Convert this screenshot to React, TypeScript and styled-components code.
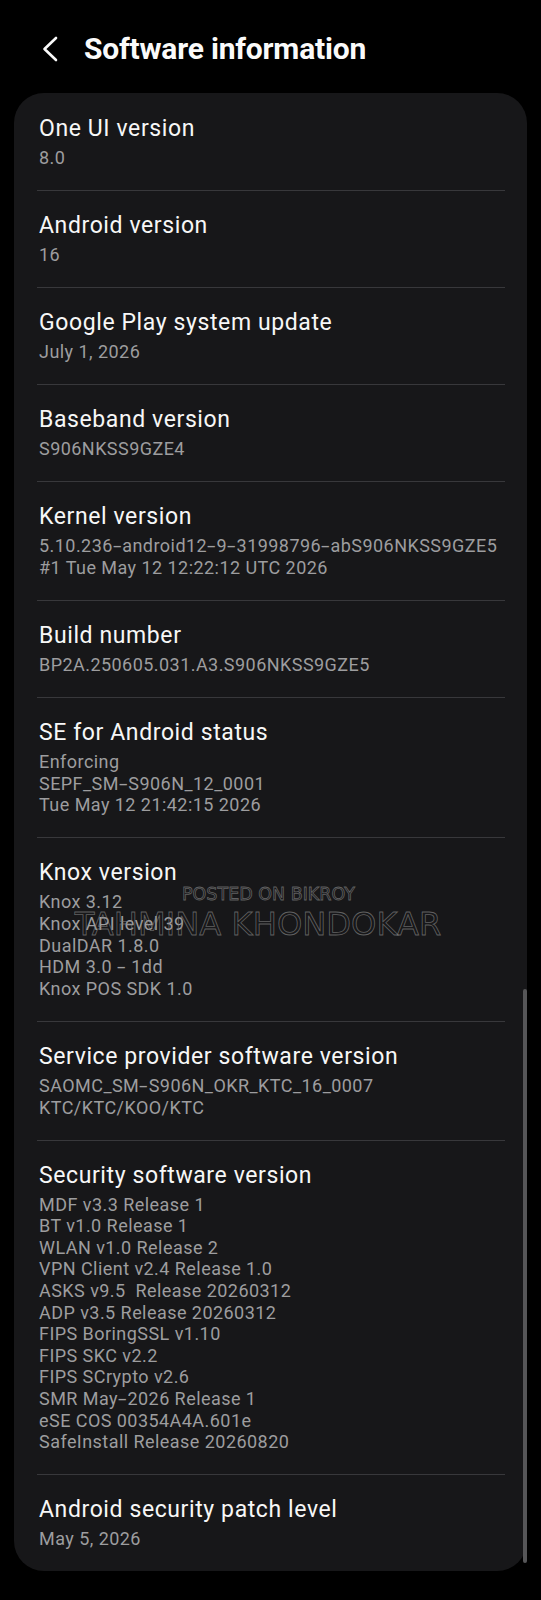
import styled, { createGlobalStyle } from "styled-components";

const GlobalStyle = createGlobalStyle`
  html, body {
    margin: 0;
    padding: 0;
    background: #000;
  }
  body {
    font-family: Roboto, "Noto Sans", "Liberation Sans", sans-serif;
    -webkit-font-smoothing: antialiased;
  }
`;

interface InfoItem {
  title: string;
  lines: string[];
}

const items: InfoItem[] = [
  { title: "One UI version", lines: ["8.0"] },
  { title: "Android version", lines: ["16"] },
  { title: "Google Play system update", lines: ["July 1, 2026"] },
  { title: "Baseband version", lines: ["S906NKSS9GZE4"] },
  {
    title: "Kernel version",
    lines: [
      "5.10.236-android12-9-31998796-abS906NKSS9GZE5",
      "#1 Tue May 12 12:22:12 UTC 2026",
    ],
  },
  { title: "Build number", lines: ["BP2A.250605.031.A3.S906NKSS9GZE5"] },
  {
    title: "SE for Android status",
    lines: ["Enforcing", "SEPF_SM-S906N_12_0001", "Tue May 12 21:42:15 2026"],
  },
  {
    title: "Knox version",
    lines: [
      "Knox 3.12",
      "Knox API level 39",
      "DualDAR 1.8.0",
      "HDM 3.0 - 1dd",
      "Knox POS SDK 1.0",
    ],
  },
  {
    title: "Service provider software version",
    lines: ["SAOMC_SM-S906N_OKR_KTC_16_0007", "KTC/KTC/KOO/KTC"],
  },
  {
    title: "Security software version",
    lines: [
      "MDF v3.3 Release 1",
      "BT v1.0 Release 1",
      "WLAN v1.0 Release 2",
      "VPN Client v2.4 Release 1.0",
      "ASKS v9.5  Release 20260312",
      "ADP v3.5 Release 20260312",
      "FIPS BoringSSL v1.10",
      "FIPS SKC v2.2",
      "FIPS SCrypto v2.6",
      "SMR May-2026 Release 1",
      "eSE COS 00354A4A.601e",
      "SafeInstall Release 20260820",
    ],
  },
  { title: "Android security patch level", lines: ["May 5, 2026"] },
];

const Page = styled.div`
  width: 541px;
  min-height: 1600px;
  background: #000;
`;

const Header = styled.header`
  display: flex;
  align-items: center;
  gap: 26px;
  height: 36px;
  padding: 31px 0 26px 42px;
`;

const BackButton = styled.button`
  display: flex;
  align-items: center;
  padding: 0;
  border: 0;
  background: none;
  cursor: pointer;
`;

const Title = styled.h1`
  margin: 0;
  color: #fafafa;
  font-size: 30px;
  font-weight: 700;
  line-height: 36px;
  letter-spacing: -0.2px;
`;

const Card = styled.section`
  position: relative;
  margin: 0 14px;
  padding: 1px 22px 0 23px;
  background: #171719;
  border-radius: 30px;
`;

const Row = styled.div`
  display: flex;
  flex-direction: column;
  gap: 4px;
  padding: 21px 2px 21.5px;
  border-top: 1px solid #38383b;

  &:first-child {
    border-top: 0;
  }
`;

const RowTitle = styled.div`
  color: #f7f7f7;
  font-size: 23px;
  line-height: 28px;
  letter-spacing: 0.6px;
`;

const RowValue = styled.div`
  color: #9d9d9f;
  font-size: 18px;
  line-height: 21.6px;
  letter-spacing: 0.45px;
  white-space: pre-wrap;
`;

// Samsung's font draws a wider hyphen than Roboto does
const Dash = styled.span`
  display: inline-block;
  margin: 0 2px;
  transform: scaleX(1.7);
`;

const Watermark = styled.div`
  position: absolute;
  left: 0;
  right: 0;
  top: 789px;
  display: flex;
  flex-direction: column;
  align-items: center;
  pointer-events: none;
  font-family: "DejaVu Sans", "Liberation Sans", sans-serif;
  color: transparent;
  -webkit-text-stroke: 0.8px rgba(130, 130, 130, 0.7);
`;

const MarkSmall = styled.span`
  font-size: 17.5px;
  line-height: 24px;
  margin-right: 4px;
`;

const MarkLarge = styled.span`
  font-size: 32.2px;
  line-height: 36px;
  margin-right: 25px;
`;

const ScrollThumb = styled.div`
  position: absolute;
  right: 0;
  top: 896px;
  width: 4px;
  height: 574px;
  border-radius: 2px;
  background: #565658;
`;

function withDashes(line: string) {
  const parts = line.split("-");
  return parts.map((part, i) => (
    <span key={i}>
      {i > 0 && <Dash>-</Dash>}
      {part}
    </span>
  ));
}

export default function App() {
  return (
    <Page>
      <GlobalStyle />
      <Header>
        <BackButton aria-label="Back">
          <svg width="16" height="26" viewBox="0 0 16 26">
            <path
              d="M14 2 L2.5 13 L14 24"
              fill="none"
              stroke="#fafafa"
              strokeWidth="2.6"
              strokeLinecap="round"
              strokeLinejoin="round"
            />
          </svg>
        </BackButton>
        <Title>Software information</Title>
      </Header>
      <Card>
        {items.map((item) => (
          <Row key={item.title}>
            <RowTitle>{item.title}</RowTitle>
            <RowValue>
              {item.lines.map((line, i) => (
                <div key={i}>{withDashes(line)}</div>
              ))}
            </RowValue>
          </Row>
        ))}
        <Watermark>
          <MarkSmall>POSTED ON BIKROY</MarkSmall>
          <MarkLarge>TAHMINA KHONDOKAR</MarkLarge>
        </Watermark>
        <ScrollThumb />
      </Card>
    </Page>
  );
}
